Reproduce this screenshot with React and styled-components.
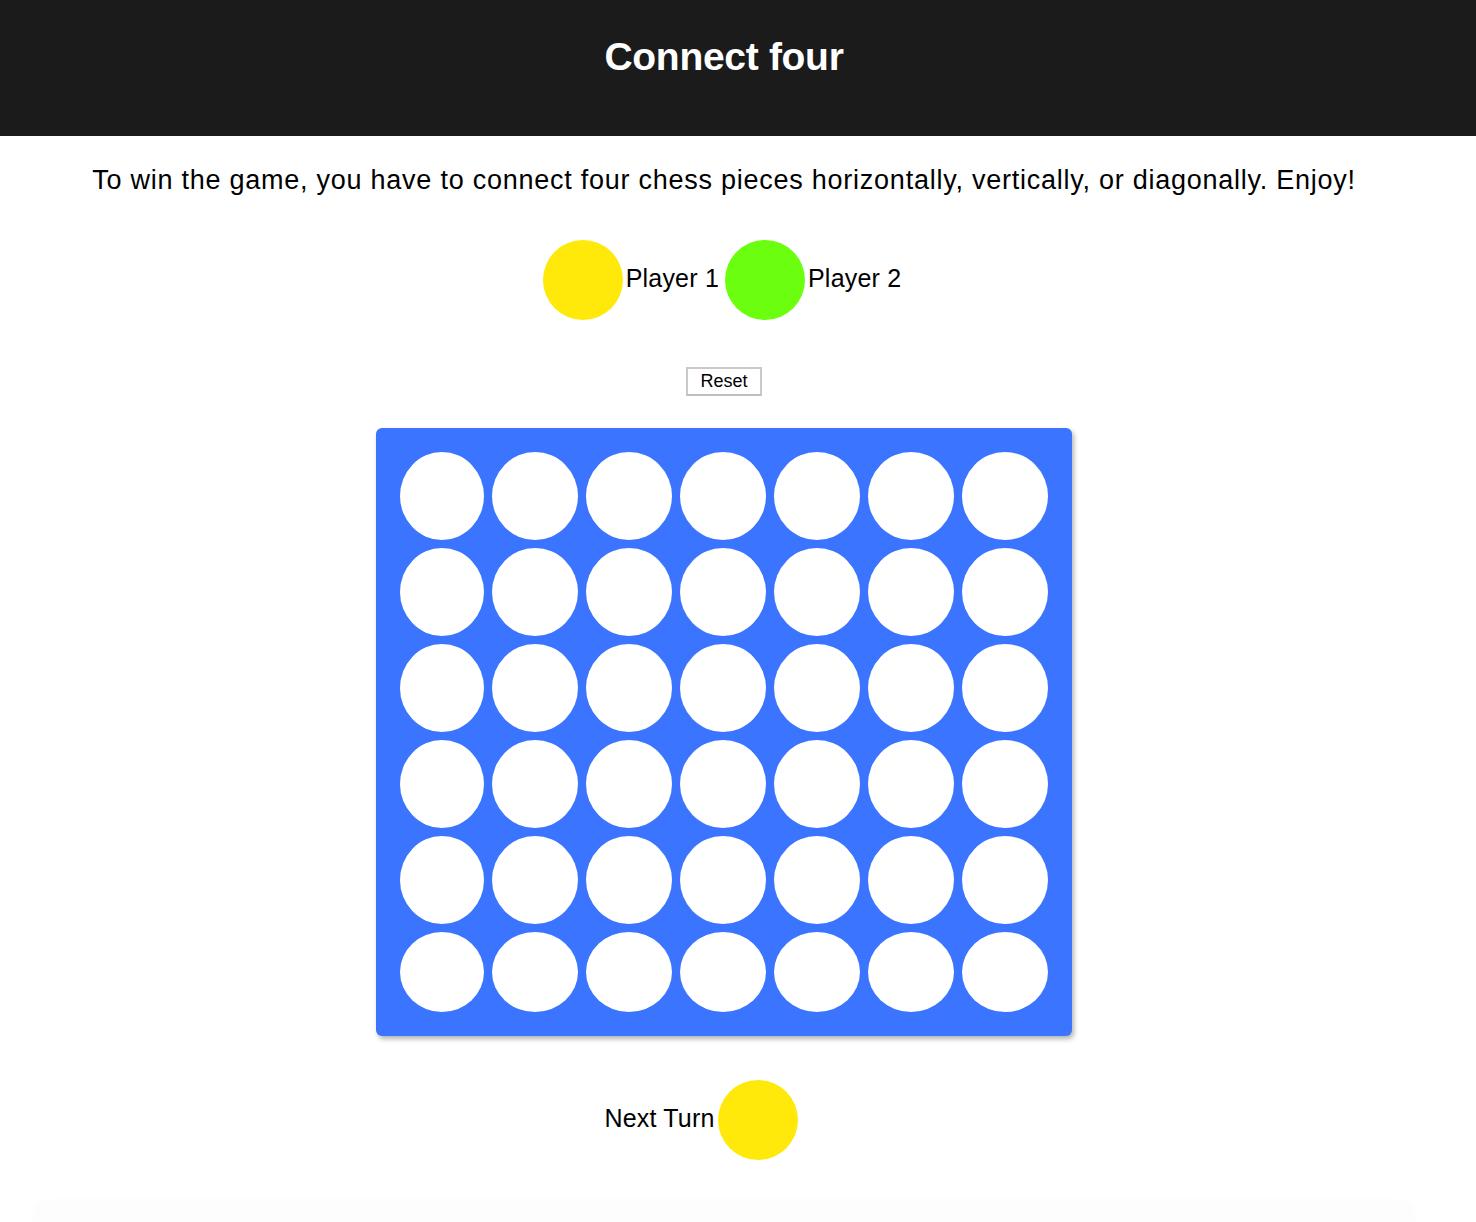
import React from "react";
import styled, { createGlobalStyle } from "styled-components";

const GlobalStyle = createGlobalStyle`
    body {
        margin: 0;
        background: #ffffff;
        font-family: "Liberation Sans", Arial, Helvetica, sans-serif;
        color: #000;
    }
`;

const ROWS = 6;
const COLS = 7;

const App = () => {
    const cells = [];
    for (let r = 0; r < ROWS; r++) {
        for (let c = 0; c < COLS; c++) {
            cells.push(<Cell key={`${r}-${c}`} />);
        }
    }

    return (
        <>
            <GlobalStyle />
            <Header>
                <h1>Connect four</h1>
            </Header>
            <Container>
                <Intro>
                    To win the game, you have to connect four chess pieces horizontally, vertically, or diagonally. Enjoy!
                </Intro>
                <Players>
                    <Piece color="#ffe90b" />
                    <Label>Player 1</Label>
                    <Piece color="#6bff0f" />
                    <Label>Player 2</Label>
                </Players>
                <ResetButton>Reset</ResetButton>
                <Board>{cells}</Board>
                <NextTurn>
                    <Label>Next Turn</Label>
                    <Piece color="#ffe90b" />
                </NextTurn>
                <Footer />
            </Container>
        </>
    );
};

const Header = styled.header`
    background: #1b1b1b;
    height: 136px;
    display: flex;
    align-items: center;
    justify-content: center;
    padding-right: 28px;
    box-sizing: border-box;
    h1 {
        margin: 0 0 22px 0;
        color: #ffffff;
        font-size: 39px;
        font-weight: 700;
        letter-spacing: -0.3px;
    }
`;

const Container = styled.main`
    display: flex;
    flex-direction: column;
    align-items: center;
    padding-right: 28px;
`;

const Intro = styled.p`
    margin: 29px 0 0 0;
    font-size: 27px;
    line-height: 30px;
    letter-spacing: 0.75px;
    text-align: center;
    white-space: nowrap;
`;

const Players = styled.div`
    margin-top: 45px;
    display: flex;
    align-items: center;
    gap: 3px;
    padding-right: 1px;
`;

const Piece = styled.span`
    display: inline-block;
    width: 80px;
    height: 80px;
    border-radius: 50%;
    background: ${(p) => p.color};
`;

const Label = styled.span`
    font-size: 25px;
    line-height: 30px;
    letter-spacing: 0.2px;
    margin-right: 3px;
    margin-top: -5px;
`;

const ResetButton = styled.button`
    margin-top: 47px;
    width: 76px;
    height: 29px;
    background: #ffffff;
    border: 2px solid #c9c9c9;
    border-bottom-color: #bdbdbd;
    font-family: "Liberation Sans", Arial, sans-serif;
    font-size: 18px;
    color: #000;
    padding: 0;
    cursor: pointer;
`;

const Board = styled.div`
    margin-top: 32px;
    background: #3a74ff;
    border-radius: 6px;
    box-shadow: 2px 3px 5px rgba(0, 0, 0, 0.3);
    padding: 24px;
    display: grid;
    grid-template-columns: 84px repeat(6, 86px);
    grid-template-rows: repeat(5, 88px) 80px;
    gap: 8px;
`;

const Cell = styled.div`
    background: #ffffff;
    border-radius: 50%;
`;

const NextTurn = styled.div`
    margin-top: 44px;
    display: flex;
    align-items: center;
    padding-right: 46px;
`;

const Footer = styled.div`
    margin-top: 40px;
    width: 1380px;
    height: 60px;
    border-radius: 14px;
    background: #fdfdfd;
    box-shadow: 0 0 12px rgba(0, 0, 0, 0.012);
`;

export default App;
